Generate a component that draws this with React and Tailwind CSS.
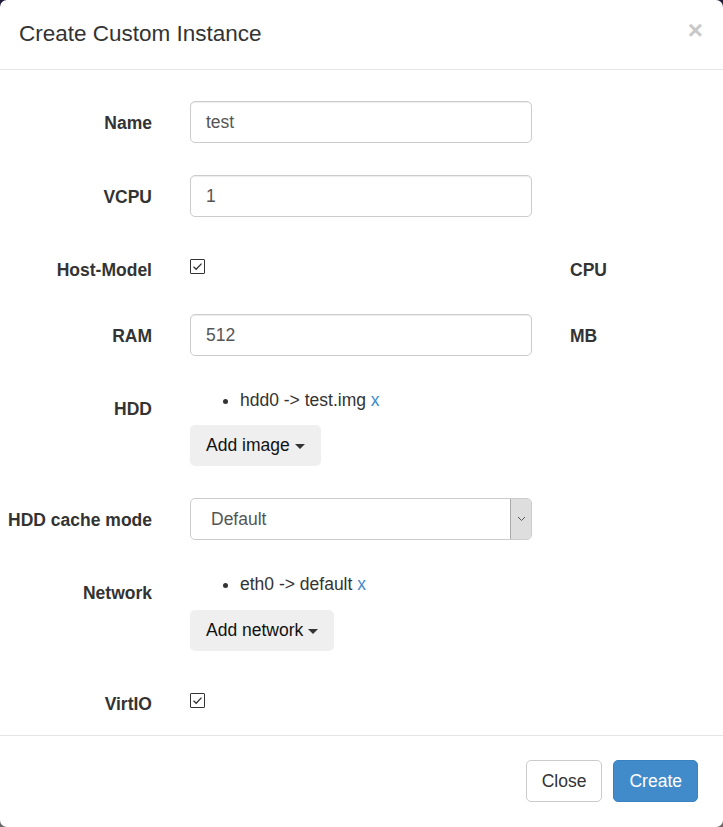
import React from 'react';

const font = { fontFamily: '"Liberation Sans", Arial, sans-serif' };

const Check = () => (
  <div className="w-[15px] h-[15px] border border-[#333] rounded-[1px] bg-white flex items-center justify-center">
    <svg width="11" height="11" viewBox="0 0 11 11" fill="none">
      <path d="M1.5 5.8 L4.2 8.3 L9.5 2.6" stroke="#333" strokeWidth="1.3" />
    </svg>
  </div>
);

const Caret = () => (
  <span className="inline-block ml-[5px] align-middle w-0 h-0 border-t-[5px] border-t-[#333] border-x-[5px] border-x-transparent" />
);

const Label = ({ children, className = '' }) => (
  <div className={`w-[152px] shrink-0 text-right font-bold text-[#333] text-[17.5px] leading-[25px] ${className}`}>
    {children}
  </div>
);

const Input = ({ value }) => (
  <div className="w-[342px] h-[42px] border border-[#ccc] rounded-[5px] px-[15px] pt-[1px] flex items-center text-[17.5px] text-[#555] shadow-[inset_0_1px_1px_rgba(0,0,0,0.075)]">
    {value}
  </div>
);

export default function App() {
  return (
    <div className="w-[723px] h-[827px] bg-linear-to-b from-[#1f1b3a] to-[#6a6a6a]" style={font}>
      <div className="w-full h-full bg-white rounded-[7px] flex flex-col">
        {/* Header */}
        <div className="h-[70px] border-b border-[#e5e5e5] pl-[19px] pr-[20px] flex items-center justify-between">
          <h4 className="text-[22.5px] text-[#333] leading-[32px] -mt-[1px]">Create Custom Instance</h4>
          <span className="text-[26px] font-bold text-[#c8c8c8] leading-none -mt-[10px]">×</span>
        </div>

        {/* Body */}
        <div className="flex-1 pt-[31px]">
          {/* Name */}
          <div className="flex items-center h-[42px]">
            <Label className="pt-[2px]">Name</Label>
            <div className="ml-[38px]"><Input value="test" /></div>
          </div>

          {/* VCPU */}
          <div className="flex items-center h-[42px] mt-[32px]">
            <Label className="pt-[2px]">VCPU</Label>
            <div className="ml-[38px]"><Input value="1" /></div>
          </div>

          {/* Host-Model */}
          <div className="flex items-center h-[42px] mt-[31px]">
            <Label className="pt-[2px]">Host-Model</Label>
            <div className="ml-[38px] w-[342px] self-start mt-[11px]"><Check /></div>
            <div className="ml-[38px] pt-[2px] font-bold text-[#333] text-[17.5px]">CPU</div>
          </div>

          {/* RAM */}
          <div className="flex items-center h-[42px] mt-[24px]">
            <Label className="pt-[2px]">RAM</Label>
            <div className="ml-[38px]"><Input value="512" /></div>
            <div className="ml-[38px] pt-[2px] font-bold text-[#333] text-[17.5px]">MB</div>
          </div>

          {/* HDD */}
          <div className="flex mt-[33px]">
            <Label className="pt-[8px]">HDD</Label>
            <div className="ml-[38px]">
              <ul className="list-disc pl-[50px] text-[17.5px] leading-[22px] text-[#333]">
                <li>hdd0 -&gt; test.img <span className="text-[#428bca]">x</span></li>
              </ul>
              <button className="mt-[14px] h-[41px] px-[16px] bg-[#efefef] rounded-[5px] text-[17.5px] text-[#111]">
                Add image<Caret />
              </button>
            </div>
          </div>

          {/* HDD cache mode */}
          <div className="flex items-center h-[42px] mt-[32px]">
            <Label className="pt-[2px]">HDD cache mode</Label>
            <div className="ml-[38px] w-[342px] h-[42px] border border-[#ccc] rounded-[5px] flex overflow-hidden">
              <div className="flex-1 flex items-center pl-[20px] pt-[1px] text-[17.5px] text-[#555]">Default</div>
              <div className="w-[21px] bg-[#dedede] border-l border-[#aaa] flex items-center justify-center">
                <svg width="9" height="6" viewBox="0 0 9 6" fill="none">
                  <path d="M1 1 L4.5 4.5 L8 1" stroke="#555" strokeWidth="1" />
                </svg>
              </div>
            </div>
          </div>

          {/* Network */}
          <div className="flex mt-[33px]">
            <Label className="pt-[8px]">Network</Label>
            <div className="ml-[38px]">
              <ul className="list-disc pl-[50px] text-[17.5px] leading-[22px] text-[#333]">
                <li>eth0 -&gt; default <span className="text-[#428bca]">x</span></li>
              </ul>
              <button className="mt-[15px] h-[41px] px-[16px] bg-[#efefef] rounded-[5px] text-[17.5px] text-[#111]">
                Add network<Caret />
              </button>
            </div>
          </div>

          {/* VirtIO */}
          <div className="flex items-center h-[42px] mt-[31px]">
            <Label className="pt-[2px]">VirtIO</Label>
            <div className="ml-[38px] self-start mt-[11px]"><Check /></div>
          </div>
        </div>

        {/* Footer */}
        <div className="border-t border-[#e5e5e5] h-[92px] pt-[24px] pr-[25px] flex justify-end gap-[11px]">
          <button className="h-[42px] px-[15px] border border-[#ccc] rounded-[5px] bg-white text-[17.5px] text-[#333]">Close</button>
          <button className="h-[42px] px-[15px] border border-[#3a81c0] rounded-[5px] bg-[#428bca] text-[17.5px] text-white">Create</button>
        </div>
      </div>
    </div>
  );
}
